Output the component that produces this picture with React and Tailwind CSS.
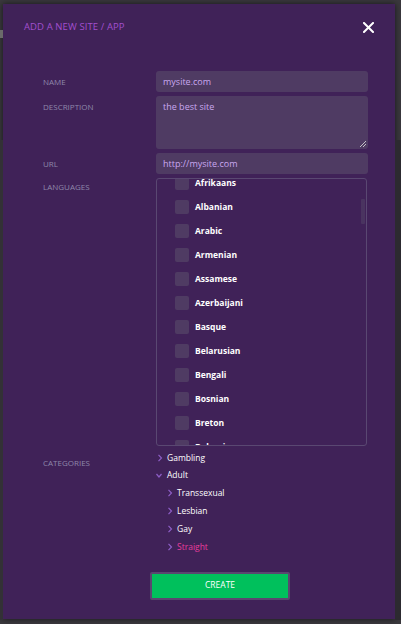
import React from "react";

const languages = [
  "Afrikaans","Albanian","Arabic","Armenian","Assamese","Azerbaijani","Basque","Belarusian","Bengali","Bosnian","Breton","Bulgarian","Catalan",
];

function Chevron({ down, className }) {
  return (
    <svg width="6" height="8" viewBox="0 0 6 8" className={className}>
      {down ? (
        <path d="M0.5 2 L3 5 L5.5 2" fill="none" stroke="#8d5ec6" strokeWidth="1.2" />
      ) : (
        <path d="M1.5 0.8 L4.5 4 L1.5 7.2" fill="none" stroke="#8d5ec6" strokeWidth="1.2" />
      )}
    </svg>
  );
}

export default function App() {
  return (
    <div
      className="w-[401px] h-[624px] bg-[#3a383d] relative overflow-hidden"
      style={{ fontFamily: '"Open Sans", "Noto Sans", sans-serif' }}
    >
      <div className="absolute left-0 top-[30px] w-[3px] h-[8px] bg-[#6a6a6a]" />
      <div className="absolute left-0 top-[140px] w-[3px] h-[480px] bg-[#333136]" />
      <div className="absolute right-0 top-[140px] w-[6px] h-[480px] bg-[#2c2a30]" />
      <div className="ml-[3px] mt-[4px] w-[392px] h-[615px] bg-[#402258] flex flex-col shadow-[0_0_6px_rgba(0,0,0,0.6)]">
        <div className="flex items-start justify-between pl-[21px] pr-[21px] pt-[16px] h-[44px]">
          <span className="text-[9.5px] text-[#a24fcf] tracking-[0.1px]">ADD A NEW SITE / APP</span>
          <svg width="11" height="11" viewBox="0 0 11 11" className="mt-[2px]">
            <path d="M1 1 L10 10 M10 1 L1 10" stroke="white" strokeWidth="2" strokeLinecap="square" />
          </svg>
        </div>

        <div className="mt-[23px] flex flex-col gap-[4px]">
          <div className="flex items-center h-[21px]">
            <div className="w-[153px] pl-[40px] text-[8px] text-[#8f88aa]">NAME</div>
            <div className="w-[212px] h-[21px] rounded-[3px] bg-[#4f3b63] text-[9px] text-[#c9a8f0] flex items-center pl-[7px]">mysite.com</div>
          </div>
          <div className="flex items-start h-[53px]">
            <div className="w-[153px] pl-[40px] text-[8px] text-[#8f88aa] pt-[5px]">DESCRIPTION</div>
            <div className="relative w-[212px] h-[53px] rounded-[3px] bg-[#4f3b63] text-[9px] text-[#c9a8f0] pl-[7px] pt-[4px]">
              the best site
              <svg width="8" height="8" viewBox="0 0 8 8" className="absolute right-[1px] bottom-[1px]">
                <path d="M1 7 L7 1 M4 7 L7 4" stroke="#cfcfcf" strokeWidth="0.9" />
              </svg>
            </div>
          </div>
          <div className="flex items-center h-[21px]">
            <div className="w-[153px] pl-[40px] text-[8px] text-[#8f88aa]">URL</div>
            <div className="w-[212px] h-[21px] rounded-[3px] bg-[#4f3b63] text-[9px] text-[#c9a8f0] flex items-center pl-[7px]">http://mysite.com</div>
          </div>
          <div className="flex items-start">
            <div className="w-[153px] pl-[40px] text-[8px] text-[#8f88aa] pt-[3px]">LANGUAGES</div>
            <div className="relative w-[211px] h-[268px] rounded-[3px] border border-[#5a4872] overflow-hidden">
              <div className="mt-[-8px] flex flex-col">
                {languages.map((l) => (
                  <div key={l} className="h-[24px] flex items-center pl-[18px] gap-[6px]">
                    <div className="w-[14px] h-[14px] rounded-[2px] bg-[#4f3b63]" />
                    <span className="text-[8.5px] font-bold text-white">{l}</span>
                  </div>
                ))}
              </div>
              <div className="absolute right-[1px] top-[20px] w-[4px] h-[25px] bg-[#4a3460] rounded-[1px]" />
            </div>
          </div>
          <div className="flex items-start mt-[-1px]">
            <div className="w-[153px] pl-[40px] text-[8px] text-[#8f88aa] pt-[8px]">CATEGORIES</div>
            <div className="flex flex-col text-[8.5px] text-white">
              <div className="h-[17.8px] flex items-center">
                <Chevron className="ml-[1px] mr-[4px]" />
                <span>Gambling</span>
              </div>
              <div className="h-[17.8px] flex items-center">
                <Chevron down className="ml-[0px] mr-[5px]" />
                <span>Adult</span>
              </div>
              {["Transsexual", "Lesbian", "Gay", "Straight"].map((c) => (
                <div key={c} className="h-[17.8px] flex items-center pl-[10px]">
                  <Chevron className="ml-[1px] mr-[4px]" />
                  <span className={c === "Straight" ? "text-[#e63d9c]" : "text-white"}>{c}</span>
                </div>
              ))}
            </div>
          </div>
        </div>

        <div className="flex mt-[16px] pl-[147px]">
          <div className="w-[140px] h-[28px] border-[2px] border-[#5a4670] bg-[#00c05c] flex items-center justify-center rounded-[2px]">
            <span className="text-[8.5px] text-white">CREATE</span>
          </div>
        </div>
      </div>
    </div>
  );
}
